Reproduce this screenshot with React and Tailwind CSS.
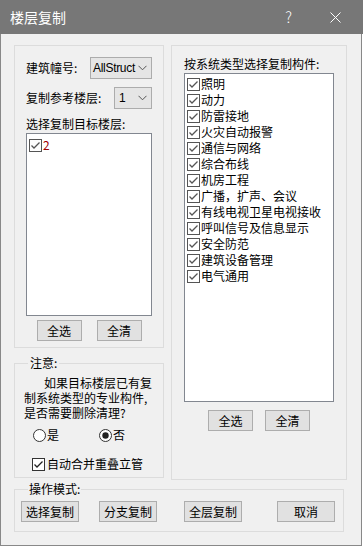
import React, { useState } from 'react';

const font = { fontFamily: '"Noto Sans CJK SC", "Liberation Sans", sans-serif' };

const CheckBox = ({ checked, soft }) => (
  <svg width="13" height="13" viewBox="0 0 13 13" className="shrink-0">
    <rect x="0.5" y="0.5" width="12" height="12" fill="#fff" stroke={soft ? '#555' : '#333'} />
    {checked && <path d="M2.5 6.5 L5 9 L10.5 3.5" fill="none" stroke={soft ? '#555' : '#222'} strokeWidth="1.3" />}
  </svg>
);

const Radio = ({ checked }) => (
  <svg width="13" height="13" viewBox="0 0 13 13" className="shrink-0">
    <circle cx="6.5" cy="6.5" r="6" fill="#fff" stroke="#333" />
    {checked && <circle cx="6.5" cy="6.5" r="3.2" fill="#222" />}
  </svg>
);

const Chevron = () => (
  <svg width="9" height="6" viewBox="0 0 9 6">
    <path d="M0.5 0.8 L4.5 4.8 L8.5 0.8" fill="none" stroke="#555" strokeWidth="1" />
  </svg>
);

const Btn = ({ children, className }) => (
  <button className={'h-[21px] border border-[#adadad] bg-[#e1e1e1] text-[12px] leading-none text-black ' + className}>
    {children}
  </button>
);

const systems = [
  '照明', '动力', '防雷接地', '火灾自动报警', '通信与网络', '综合布线', '机房工程',
  '广播，扩声、会议', '有线电视卫星电视接收', '呼叫信号及信息显示', '安全防范', '建筑设备管理', '电气通用',
];

export default function App() {
  const [clean, setClean] = useState(false);

  return (
    <div className="w-[363px] h-[552px] bg-white" style={font}>
      <div className="h-[34px] bg-[#777777] flex items-center text-white">
        <span className="ml-[10px] text-[14px]">楼层复制</span>
        <span className="ml-auto mr-[38px] text-[15px] font-light">?</span>
        <svg width="11" height="11" viewBox="0 0 11 11" className="mr-[22px]">
          <path d="M0.5 0.5 L10.5 10.5 M10.5 0.5 L0.5 10.5" stroke="#fff" strokeWidth="1" />
        </svg>
      </div>
      <div className="w-[362px] h-[512px] bg-[#f0f0f0] border-x border-b border-[#888] text-[12px] text-black">
        <div className="flex pt-[11px] pl-[13px] gap-[7px]">
          <div className="w-[150px] flex flex-col">
            <div className="h-[303px] border border-[#dcdcdc] flex flex-col px-[11px]">
              <div className="flex items-center mt-[11px] h-[22px]">
                <span>建筑幢号:</span>
                <div className="ml-auto w-[62px] h-[22px] border border-[#acacac] bg-[#e5e5e5] flex items-center pl-[2px] pr-[4px]">
                  <span className="text-[12px] tracking-[-0.3px]" style={{ fontFamily: '"Liberation Sans", sans-serif' }}>AllStruct</span>
                  <span className="ml-auto"><Chevron /></span>
                </div>
              </div>
              <div className="flex items-center mt-[8px] h-[22px]">
                <span>复制参考楼层:</span>
                <div className="ml-auto w-[38px] h-[22px] border border-[#acacac] bg-[#e5e5e5] flex items-center pl-[4px] pr-[4px]">
                  <span style={{ fontFamily: '"Liberation Sans", sans-serif' }}>1</span>
                  <span className="ml-auto"><Chevron /></span>
                </div>
              </div>
              <div className="mt-[6px] leading-[18px]">选择复制目标楼层:</div>
              <div className="h-[183px] border border-[#828790] bg-white pt-[3px] pl-[2px]">
                <div className="flex items-center gap-[1px] h-[16px]">
                  <CheckBox checked soft />
                  <span className="text-[#a00000] leading-none">2</span>
                </div>
              </div>
              <div className="flex justify-center gap-[15px] mt-[4px]">
                <Btn className="w-[45px]">全选</Btn>
                <Btn className="w-[45px]">全清</Btn>
              </div>
            </div>
            <fieldset className="mt-[8px] h-[122px] border border-[#dcdcdc] px-[8px]">
              <legend className="ml-[5px] px-[2px] leading-[14px]">注意:</legend>
              <p className="mt-[5px] leading-[15px] px-[1px]">
                <span className="pl-[20px]">如果目标楼层已有复制系统类型的专业构件,是否需要删除清理?</span>
              </p>
              <div className="flex items-center mt-[7px] h-[16px]">
                <button className="flex items-center gap-[1px] ml-[10px]" onClick={() => setClean(true)}>
                  <Radio checked={clean} /><span>是</span>
                </button>
                <button className="flex items-center gap-[1px] ml-[40px]" onClick={() => setClean(false)}>
                  <Radio checked={!clean} /><span>否</span>
                </button>
              </div>
              <div className="flex items-center gap-[2px] mt-[13px] ml-[9px] h-[16px]">
                <CheckBox checked />
                <span>自动合并重叠立管</span>
              </div>
            </fieldset>
          </div>
          <div className="w-[176px] h-[435px] border border-[#dcdcdc] flex flex-col px-[12px]">
            <div className="mt-[9px] leading-[18px]">按系统类型选择复制构件:</div>
            <div className="h-[329px] border border-[#828790] bg-white pt-[2px] pl-[2px]">
              {systems.map((s) => (
                <div key={s} className="flex items-center gap-[1px] h-[16px]">
                  <CheckBox checked soft />
                  <span className="leading-none whitespace-nowrap">{s}</span>
                </div>
              ))}
            </div>
            <div className="flex justify-center gap-[12px] mt-[8px]">
              <Btn className="w-[45px]">全选</Btn>
              <Btn className="w-[45px]">全清</Btn>
            </div>
          </div>
        </div>
        <fieldset className="ml-[13px] mt-[2px] w-[330px] h-[50px] border border-[#dcdcdc] pl-[6px]">
          <legend className="ml-[7px] px-[1px] leading-[14px]">操作模式:</legend>
          <div className="flex items-center mt-[5px]">
            <Btn className="w-[58px]">选择复制</Btn>
            <Btn className="w-[58px] ml-[20px]">分支复制</Btn>
            <Btn className="w-[58px] ml-[27px]">全层复制</Btn>
            <Btn className="w-[58px] ml-[35px]">取消</Btn>
          </div>
        </fieldset>
      </div>
    </div>
  );
}
